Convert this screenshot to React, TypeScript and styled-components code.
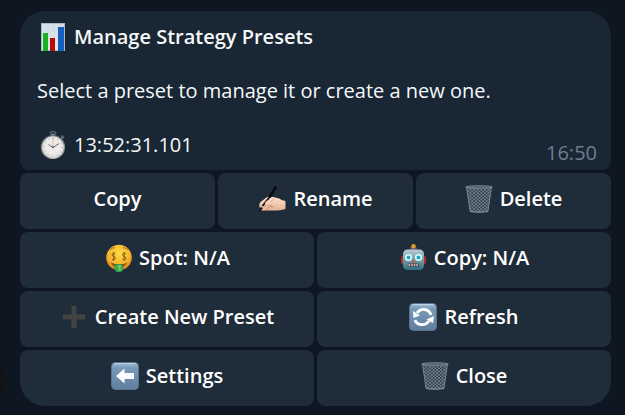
import React from "react";
import styled, { createGlobalStyle } from "styled-components";

const GlobalStyle = createGlobalStyle`
  *, *::before, *::after { box-sizing: border-box; }
  body {
    margin: 0;
    background: #0e1621;
    font-family: "Open Sans", "Noto Sans", sans-serif;
    font-size: 20px;
    line-height: 27px;
    color: #f5f8fa;
  }
`;

const Chat = styled.main`
  position: relative;
  min-height: 100vh;
  overflow: hidden;
  padding: 11px 14px 9px 20px;
`;

const Avatar = styled.div`
  position: absolute;
  left: -34px;
  bottom: 14px;
  width: 40px;
  height: 40px;
  border-radius: 50%;
  background: #111413;
`;

const Message = styled.section`
  display: flex;
  flex-direction: column;
  gap: 3px;
`;

const Bubble = styled.article`
  display: flex;
  flex-direction: column;
  gap: 27px;
  padding: 12px 14px 12px 17px;
  border-radius: 25px 25px 9px 9px;
  background: #192633;
`;

const Line = styled.div`
  display: flex;
  align-items: center;
  gap: 7px;
  height: 27px;
  padding-left: 2px;
`;

const Title = styled.h1`
  margin: 0;
  font-size: 20px;
  font-weight: 600;
  line-height: 27px;
`;

const Body = styled.p`
  margin: 0;
`;

const Footer = styled.footer`
  display: flex;
  justify-content: space-between;
  align-items: flex-start;
`;

const SentAt = styled.time`
  margin: 8px 0 -8px;
  color: #6d7f8f;
`;

const Keyboard = styled.div`
  display: flex;
  flex-direction: column;
  gap: 3px;
`;

const Row = styled.div`
  display: grid;
  grid-auto-flow: column;
  grid-auto-columns: minmax(0, 1fr);
  gap: 3px;

  &:last-child > :first-child { border-bottom-left-radius: 25px; }
  &:last-child > :last-child { border-bottom-right-radius: 25px; }
`;

const Key = styled.button`
  display: flex;
  align-items: center;
  justify-content: center;
  gap: 7px;
  height: 56px;
  padding: 0 8px 4px;
  border: 0;
  border-radius: 8px;
  background: #1f2c39;
  color: #ffffff;
  font: inherit;
  font-weight: 600;
  cursor: pointer;

  &:hover { background: #263645; }
`;

const KeyLabel = styled.span`
  padding-bottom: 2px;
`;

const Glyph = styled.svg.attrs({ viewBox: "0 0 28 28", "aria-hidden": true })`
  flex: none;
  width: 28px;
  height: 28px;
`;

const ChartIcon = () => (
  <Glyph>
    <defs>
      <linearGradient id="chartPaper" x1="0" y1="0" x2="0" y2="1">
        <stop offset="0" stopColor="#d3e0e9" />
        <stop offset="1" stopColor="#e3e9ee" />
      </linearGradient>
    </defs>
    <rect x="2" y="0" width="24" height="28" fill="#a9b9c5" />
    <rect x="3" y="1" width="22" height="26" fill="url(#chartPaper)" />
    <path d="M3 7h22M3 13h22M3 19h22M9 1v26M15 1v26M21 1v26" stroke="#c6d3dd" strokeWidth=".5" />
    <rect x="4" y="10" width="5" height="18" fill="#16b51f" />
    <rect x="11" y="15" width="5" height="13" fill="#bb0b0d" />
    <rect x="19" y="4" width="6" height="24" fill="#155fc2" />
  </Glyph>
);

const StopwatchIcon = () => (
  <Glyph>
    <defs>
      <linearGradient id="watchRim" x1="0" y1="0" x2="0" y2="1">
        <stop offset="0" stopColor="#626c75" />
        <stop offset="1" stopColor="#b2b5b7" />
      </linearGradient>
    </defs>
    <ellipse cx="14" cy="2" rx="3" ry="1.8" fill="#36424d" stroke="#687480" strokeWidth=".8" />
    <path d="M14 3v3" stroke="#7d858b" strokeWidth="3" />
    <path d="m22 8 2-2" stroke="#7c858d" strokeWidth="1.5" />
    <path d="m22.5 4.8 2.5 2.3" stroke="#5e6973" strokeWidth="2" />
    <circle cx="14" cy="16" r="11.4" fill="#e6e4e2" stroke="url(#watchRim)" strokeWidth="1.4" />
    <circle cx="14" cy="16" r="9.2" fill="none" stroke="#bbb8b4" strokeWidth="1.8" strokeDasharray=".8 4.017" />
    <circle cx="14" cy="16" r="8" fill="#edebe9" />
    <path d="M14 6.5v9.5" stroke="#eba69e" strokeWidth=".9" />
    <path d="m9.500 13.500 4.500 3 6-4" fill="none" stroke="#62666a" strokeWidth="1" />
    <circle cx="14" cy="16.3" r="1" fill="#5b6065" />
  </Glyph>
);

const WritingIcon = () => (
  <Glyph>
    <defs>
      <linearGradient id="skin" x1="0" y1="0" x2="0" y2="1">
        <stop offset="0" stopColor="#ffe3ce" />
        <stop offset="1" stopColor="#e5b394" />
      </linearGradient>
    </defs>
    <path d="M1.500 22c-.5-3 0-5 3-6.500l4-3c2-1 4-1.500 6-.5 4 1 7 1 9 3l4 1v8c-4 1-8 1.500-11 1.500H5.500c-2 0-3-.5-2.500-2-1-.3-1.500-.8-1.500-1.500Z" fill="url(#skin)" />
    <path d="m6 22 4-2 4 1M8 24l4-2 4-.5M16 14l-4 3" fill="none" stroke="#c58e71" strokeWidth=".8" />
    <path d="M4.500 21 14 9" stroke="#151a20" strokeWidth="2" />
    <path d="m12 11.500 5.500-9" stroke="#080c10" strokeWidth="2.800" strokeLinecap="round" />
    <path d="m1 27 1.500-5 2.500 1Z" fill="#080b0e" />
    <path d="M7 18c1-2 3-3 4-3 2 0 3 1 2 2-2 1-3 3-5 3" fill="#f8d2b9" />
  </Glyph>
);

const TrashIcon = () => (
  <Glyph>
    <defs>
      <pattern id="wireMesh" width="3.6" height="3.2" patternUnits="userSpaceOnUse">
        <path d="M0 0 3.6 3.2M3.6 0 0 3.2" stroke="#82909e" strokeWidth=".7" />
      </pattern>
    </defs>
    <path d="M1.500 2h25L23 27H5Z" fill="#303e4b" />
    <path d="M1.500 2h25L23 27H5Z" fill="url(#wireMesh)" />
    <path d="m1.500 2 3.500 24M26.500 2 23 26" stroke="#77838e" strokeWidth="1" />
    <ellipse cx="14" cy="2" rx="13.3" ry="1.2" fill="#4a5763" stroke="#7d8995" strokeWidth="1" />
    <path d="M5 26.500c5 .8 13 .8 18 0" fill="none" stroke="#8e989f" strokeWidth="1.2" />
  </Glyph>
);

const MoneyFaceIcon = () => (
  <Glyph>
    <defs>
      <radialGradient id="faceFill" cx=".5" cy=".35" r=".65">
        <stop offset="0" stopColor="#ffdc45" />
        <stop offset=".65" stopColor="#f6b52e" />
        <stop offset="1" stopColor="#d97c17" />
      </radialGradient>
    </defs>
    <circle cx="15" cy="13.500" r="12.8" fill="url(#faceFill)" />
    <path d="M6 6c1.500-2 3-2.500 5-2M19 4c2-.5 4 .2 5 2" fill="none" stroke="#9c6813" strokeWidth="1" />
    <g fill="none" stroke="#7d5414" strokeWidth=".9">
      <path d="M11.500 10C10 8.500 8 9.500 8 11s3.500 1.500 3.500 3-2 2.500-3.700 1M9.700 8v9" />
      <path d="M22 10c-1.500-1.500-3.500-.5-3.500 1s3.500 1.500 3.500 3-2 2.500-3.700 1M20.200 8v9" />
    </g>
    <path d="M7 18c4 3.500 12 3.500 16 0-1 4-4 5-8 5s-7-1-8-5Z" fill="#8b4d15" />
    <path d="M11 20.500h7l1 5c-1 3.500-8 3.500-8 0Z" fill="#39ae4b" stroke="#16833c" strokeWidth=".6" />
    <path d="M17 22c-2-1-3.500.5-2 1.500s2 2 0 2.500" fill="none" stroke="#b7e6a3" strokeWidth="1" />
  </Glyph>
);

const RobotIcon = () => (
  <Glyph>
    <defs>
      <linearGradient id="robotFace" x1="0" y1="0" x2="0" y2="1">
        <stop offset="0" stopColor="#b7ccd2" />
        <stop offset=".55" stopColor="#7298a5" />
        <stop offset="1" stopColor="#2d7080" />
      </linearGradient>
    </defs>
    <rect x="2" y="12" width="4" height="8" rx="1.5" fill="#ac2e37" />
    <rect x="23" y="12" width="4" height="8" rx="1.5" fill="#ac2e37" />
    <rect x="11" y="3" width="7" height="3.5" rx="1" fill="#514c79" />
    <circle cx="14.5" cy="2.3" r="2.2" fill="#e79b2d" />
    <rect x="4" y="5.5" width="21" height="20.5" rx="4.5" fill="url(#robotFace)" />
    <circle cx="9.5" cy="13.5" r="2.8" fill="#23a5c6" stroke="#e2ffff" strokeWidth="1.500" />
    <circle cx="19.500" cy="13.5" r="2.8" fill="#23a5c6" stroke="#e2ffff" strokeWidth="1.500" />
    <path d="m14.500 15 2 3.500h-4Z" fill="#d8523f" />
    <rect x="9" y="19.500" width="11" height="3" rx="1" fill="#493a46" />
    <path d="M9.500 21h10" stroke="#f2e2da" strokeWidth="1.500" strokeDasharray="1.6 1" />
  </Glyph>
);

const PlusIcon = () => (
  <Glyph>
    <path d="M11.500 3h5v8.500H25v5h-8.500V25h-5v-8.500H3v-5h8.500Z" fill="#424345" />
  </Glyph>
);

const Tile = ({ id }: { id: string }) => (
  <>
    <defs>
      <linearGradient id={id} x1="0" y1="0" x2="0" y2="1">
        <stop offset="0" stopColor="#a7c2dc" />
        <stop offset=".2" stopColor="#7899b8" />
        <stop offset="1" stopColor="#607e9d" />
      </linearGradient>
    </defs>
    <rect x=".5" y=".5" width="27" height="27" rx="4" fill={`url(#${id})`} stroke="#56738f" />
    <path d="M4 1.500h20" stroke="#bfd2e4" strokeWidth="1" strokeLinecap="round" />
  </>
);

const RefreshIcon = () => (
  <Glyph>
    <Tile id="refreshTile" />
    <path d="M22 12C20 5.500 12 4.500 8 10M6 17C8 22.500 16 23.500 20 18" fill="none" stroke="#fff" strokeWidth="2.8" />
    <path d="m4 8 .5 7 6.500-2.500ZM25 13l-1 7-6.500-3.500Z" fill="#fff" />
  </Glyph>
);

const BackIcon = () => (
  <Glyph>
    <Tile id="backTile" />
    <path d="m5 14 8.500-7.500V11H23v6h-9.500v4.500Z" fill="#fff" />
  </Glyph>
);

type Action = { label: string; icon?: React.ComponentType };

const rows: Action[][] = [
  [{ label: "Copy" }, { label: "Rename", icon: WritingIcon }, { label: "Delete", icon: TrashIcon }],
  [{ label: "Spot: N/A", icon: MoneyFaceIcon }, { label: "Copy: N/A", icon: RobotIcon }],
  [{ label: "Create New Preset", icon: PlusIcon }, { label: "Refresh", icon: RefreshIcon }],
  [{ label: "Settings", icon: BackIcon }, { label: "Close", icon: TrashIcon }],
];

export default function App() {
  return (
    <Chat>
      <GlobalStyle />
      <Avatar />
      <Message>
        <Bubble>
          <Line>
            <ChartIcon />
            <Title>Manage Strategy Presets</Title>
          </Line>
          <Body>Select a preset to manage it or create a new one.</Body>
          <Footer>
            <Line>
              <StopwatchIcon />
              <span>13:52:31.101</span>
            </Line>
            <SentAt>16:50</SentAt>
          </Footer>
        </Bubble>
        <Keyboard>
          {rows.map((row, index) => (
            <Row key={index}>
              {row.map(({ label, icon: Icon }) => (
                <Key type="button" key={label}>
                  {Icon && <Icon />}
                  <KeyLabel>{label}</KeyLabel>
                </Key>
              ))}
            </Row>
          ))}
        </Keyboard>
      </Message>
    </Chat>
  );
}
